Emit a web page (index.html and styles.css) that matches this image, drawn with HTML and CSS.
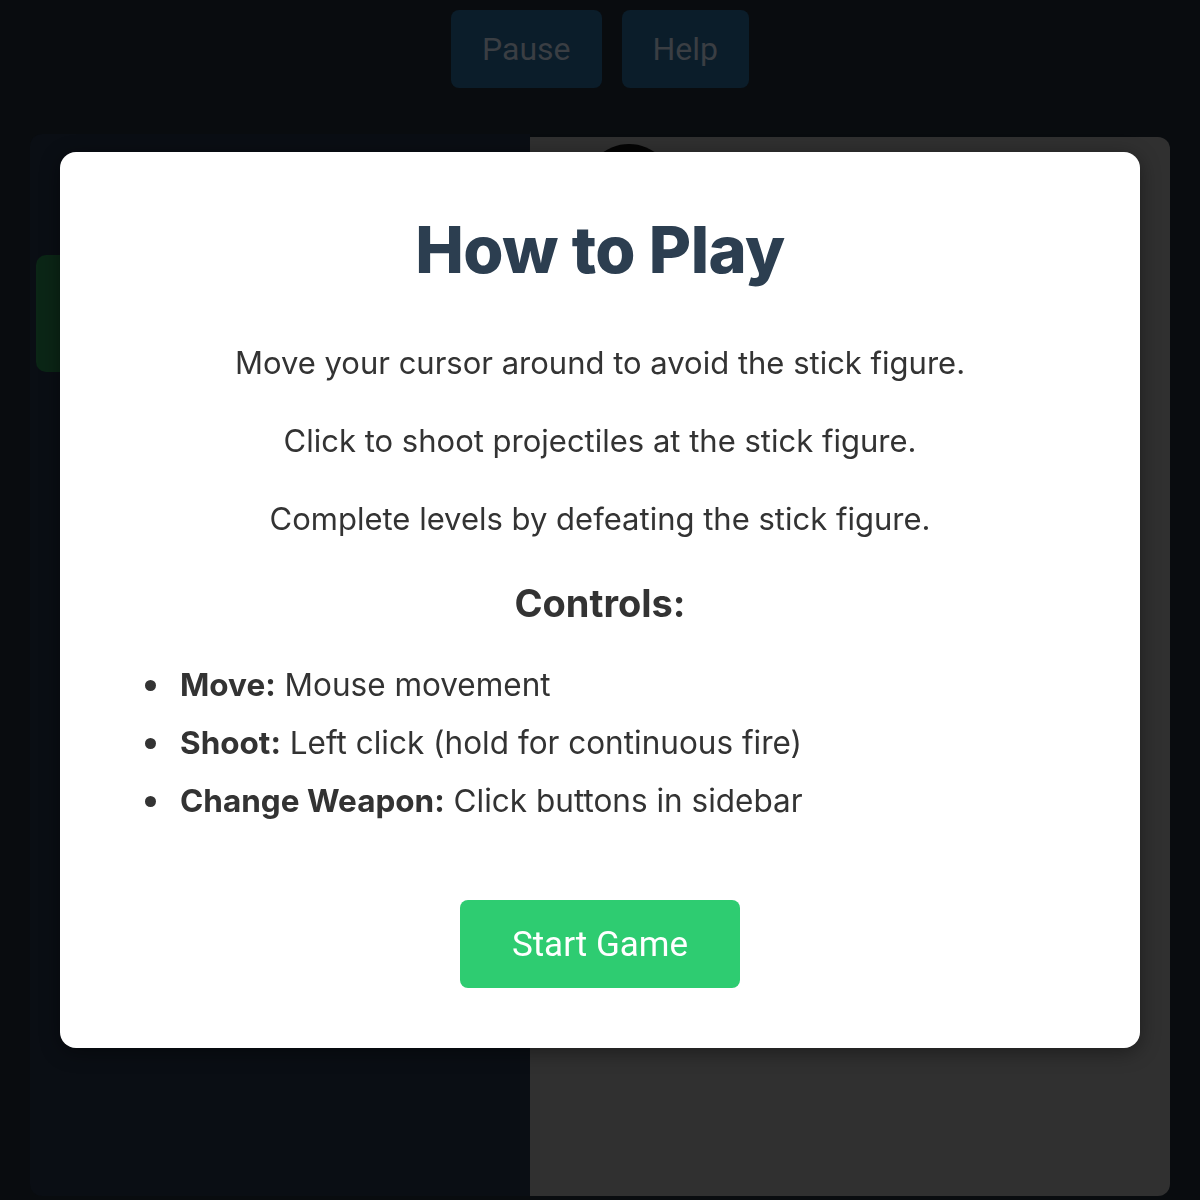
FILE: index.html
```html
<!DOCTYPE html>
<html lang="en">
<head>
  <meta charset="UTF-8" />
  <meta name="viewport" content="width=device-width, initial-scale=1.0"/>
  <title>Stick Figure Shooter</title>
  <link rel="stylesheet" href="styles.css">
</head>
<body>
  <div class="top-controls">
    <button class="top-btn pause-btn">Pause</button>
    <button class="top-btn help-btn">Help</button>
  </div>

  <div class="game">
    <div class="sidebar">
      <div class="weapon-btn"></div>
    </div>
    <div class="arena">
      <div class="stick-head"></div>
    </div>
  </div>

  <!-- Help modal -->
  <div class="overlay">
    <div class="modal">
      <h1>How to Play</h1>
      <p>Move your cursor around to avoid the stick figure.</p>
      <p>Click to shoot projectiles at the stick figure.</p>
      <p>Complete levels by defeating the stick figure.</p>
      <h2>Controls:</h2>
      <ul>
        <li><strong>Move:</strong> Mouse movement</li>
        <li><strong>Shoot:</strong> Left click (hold for continuous fire)</li>
        <li><strong>Change Weapon:</strong> Click buttons in sidebar</li>
      </ul>
      <button class="start-btn">Start Game</button>
    </div>
  </div>
</body>
</html>
```

FILE: styles.css
```css
body {
  margin: 0;
  padding: 0;
  background-color: #090c0f;
  font-family: 'Inter', sans-serif;
  height: 1200px;
  overflow: hidden;
}
.top-controls {
  display: flex;
  justify-content: center;
  gap: 20px;
  padding-top: 10px;
}
.top-btn {
  height: 78px;
  border: none;
  border-radius: 8px;
  background-color: #0b1d2a;
  color: #3a3e43;
  font-family: 'Roboto', sans-serif;
  font-size: 32px;
  padding: 0 31px;
}
.game {
  display: flex;
  margin: 46px 30px 0;
  height: 1062px;
}
.sidebar {
  width: 500px;
  background-color: #0a0e14;
  border-radius: 12px 0 0 12px;
  padding-top: 121px;
  box-sizing: border-box;
}
.weapon-btn {
  width: 120px;
  height: 117px;
  margin-left: 6px;
  background-color: #0b2616;
  border-radius: 10px;
}
.arena {
  flex: 1;
  margin-top: 3px;
  background-color: #303030;
  border-radius: 0 12px 12px 0;
  overflow: hidden;
}
.stick-head {
  width: 90px;
  height: 90px;
  border-radius: 50%;
  background-color: #050505;
  margin-top: 7px;
  margin-left: 54px;
}
.overlay {
  position: fixed;
  inset: 0;
  display: flex;
  align-items: center;
  justify-content: center;
}
.modal {
  width: 1080px;
  box-sizing: border-box;
  background: #fff;
  border-radius: 16px;
  padding: 58px 60px 60px;
  text-align: center;
  box-shadow: 0 4px 20px rgba(0, 0, 0, 0.4);
}
.modal h1 {
  font-size: 65px;
  line-height: 80px;
  font-weight: 800;
  color: #2c3e50;
  margin: 0 0 53px;
  letter-spacing: -0.5px;
}
.modal p {
  font-size: 31px;
  line-height: 40px;
  color: #333;
  margin: 0 0 38px;
}
.modal p:last-of-type {
  margin-bottom: 44px;
}
.modal h2 {
  font-size: 38px;
  line-height: 40px;
  font-weight: 700;
  color: #333;
  margin: 0 0 42px;
}
.modal ul {
  list-style: none;
  text-align: left;
  margin: 0;
  padding-left: 25px;
  display: flex;
  flex-direction: column;
  gap: 18px;
}
.modal li {
  font-size: 31.5px;
  line-height: 40px;
  color: #333;
}
.modal li::before {
  content: "";
  display: inline-block;
  width: 11px;
  height: 11px;
  border-radius: 50%;
  background-color: #333;
  margin-right: 24px;
  vertical-align: middle;
  position: relative;
  top: -2px;
}
.start-btn {
  margin-top: 79px;
  width: 280px;
  height: 88px;
  border: none;
  border-radius: 8px;
  background-color: #2ecc71;
  color: #fff;
  font-family: 'Roboto', sans-serif;
  font-size: 35px;
}
```
